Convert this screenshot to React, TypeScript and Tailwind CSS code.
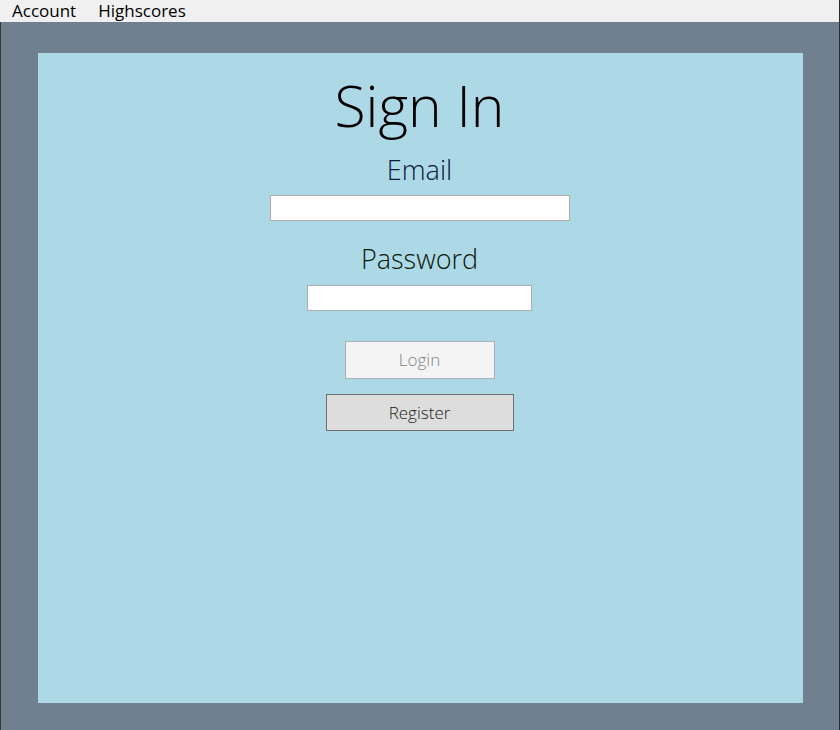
const font = { fontFamily: '"Open Sans", "Noto Sans", sans-serif' };

const App = () => {
  return (
    <main
      className="w-[840px] h-[730px] flex flex-col bg-[#708090] border-r border-[#2b2b2b]"
      style={font}
    >
      <nav className="h-[22px] bg-[#f0f0f0] flex items-center text-[17px] leading-[22px] text-black">
        <span className="pl-[12px] pr-[10px]">Account</span>
        <span className="pl-[12px] pr-[10px]">Highscores</span>
      </nav>

      <section className="flex-1 pt-[31px] pl-[37px] border-l border-[#3a3a3a]">
        <section className="w-[765px] h-[650px] bg-[#add8e6] flex flex-col items-center font-light pr-[2px]">
          <h1 className="mt-[12px] text-[57px] leading-[80px] text-black">Sign In</h1>

          <p className="mt-[9px] text-[27px] leading-[32px] text-[#0a1a3a]">Email</p>
          <input
            type="text"
            className="mt-[9px] w-[300px] h-[26px] bg-white border border-[#abadb3] outline-none"
          />

          <p className="mt-[22px] text-[27px] leading-[32px] text-[#0a1a0a]">Password</p>
          <input
            type="password"
            className="mt-[10px] w-[225px] h-[26px] bg-white border border-[#abadb3] outline-none"
          />

          <button
            disabled
            className="mt-[30px] w-[150px] h-[38px] bg-[#f4f4f4] border border-[#adb2b5] text-[17px] text-[#838383] font-light"
          >
            Login
          </button>
          <button className="mt-[15px] w-[188px] h-[37px] bg-[#dddddd] border border-[#707070] text-[17px] text-[#222] font-light">
            Register
          </button>
        </section>
      </section>
    </main>
  );
};

export default App;
